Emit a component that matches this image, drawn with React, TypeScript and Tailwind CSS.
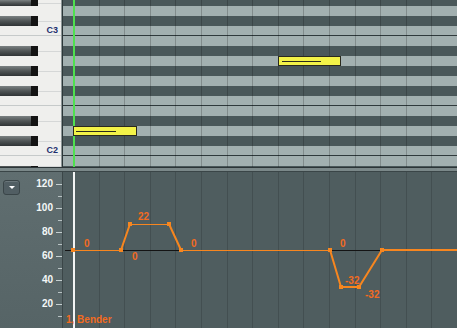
type Row = { black: boolean; h: string; line?: boolean; label?: string }

// top to bottom, D#3 (cut) .. A#1 (cut)
const rows: Row[] = [
  { black: true, h: 'h-[6px]' },
  { black: false, h: 'h-[10px]' },
  { black: true, h: 'h-[10px]' },
  { black: false, h: 'h-[10px]', line: true, label: 'C3' },
  { black: false, h: 'h-[10px]' },
  { black: true, h: 'h-[10px]' },
  { black: false, h: 'h-[10px]' },
  { black: true, h: 'h-[10px]' },
  { black: false, h: 'h-[10px]' },
  { black: true, h: 'h-[10px]' },
  { black: false, h: 'h-[10px]', line: true },
  { black: false, h: 'h-[10px]' },
  { black: true, h: 'h-[10px]' },
  { black: false, h: 'h-[10px]' },
  { black: true, h: 'h-[10px]' },
  { black: false, h: 'h-[10px]', line: true, label: 'C2' },
  { black: false, h: 'h-[10px]' },
  { black: true, h: 'h-[1px]' },
]

const beats = Array.from({ length: 16 }, (_, i) => i)
const axis = [120, 100, 80, 60, 40, 20]

const pts: [number, number][] = [
  [10, 78],
  [58, 78],
  [67, 52],
  [106, 52],
  [118, 78],
  [267, 78],
  [278, 115],
  [296, 115],
  [319, 78],
]

const ORANGE = '#f7861f'

function PianoRow({ r }: { r: Row }) {
  if (r.black) {
    return (
      <div className={`flex ${r.h}`}>
        <div className="flex w-[38px]">
          <div className="flex-1 bg-linear-to-b from-[#7b8182] via-[#4f5455] to-[#303436]" />
          <div className="w-[7px] bg-[#141414]" />
        </div>
        <div className="flex flex-1 flex-col justify-center bg-[#efefed]">
          <div className="h-px bg-[#d5d7d7]" />
        </div>
      </div>
    )
  }
  return (
    <div
      className={`flex items-center justify-end bg-[#efefed] pr-[3px] ${r.h} ${r.line ? 'border-b border-[#c6caca]' : ''}`}
    >
      {r.label ? <span className="text-[9px] font-bold leading-none text-[#1e2f6e]">{r.label}</span> : null}
    </div>
  )
}

function Controller() {
  return (
    <svg width={394} height={156} viewBox="0 0 394 156" className="block">
      {beats.slice(1).map((k) => (
        <line
          key={k}
          x1={10.5 + Math.round(25.6 * k)}
          x2={10.5 + Math.round(25.6 * k)}
          y1={0}
          y2={156}
          stroke="#000"
          strokeOpacity={0.14}
        />
      ))}
      <line x1={2} x2={394} y1={78.5} y2={78.5} stroke="#141414" />
      <rect x={10} y={0} width={2} height={156} fill="#f2f4f4" />

      <g stroke={ORANGE} fill="none">
        <path d="M10 78.5 H58 M67 52.5 H106 M118 78.5 H267" strokeWidth={1} />
        <path d="M58 78 L67 52 M106 52 L118 78" strokeWidth={2} />
        <path d="M267 78 L278 115 L296 115 L319 78 H394" strokeWidth={2} />
      </g>
      {pts.map(([x, y], i) => (
        <rect key={i} x={x - 2} y={y - 2} width={4} height={4} fill={ORANGE} />
      ))}

      <g className="fill-[#f26b1f] text-[10px] font-bold">
        <text x={21} y={75}>0</text>
        <text x={69} y={88}>0</text>
        <text x={75} y={48}>22</text>
        <text x={128} y={75}>0</text>
        <text x={277} y={75}>0</text>
        <text x={282} y={112}>-32</text>
        <text x={302} y={126}>-32</text>
        <text x={3} y={151}>1, Bender</text>
      </g>
    </svg>
  )
}

export default function App() {
  return (
    <div className="flex h-[328px] w-[457px] flex-col overflow-hidden bg-[#4f5d5f] font-['Liberation_Sans',sans-serif]">
      {/* piano roll */}
      <div className="flex h-[167px] shrink-0">
        <div className="flex w-[61px] shrink-0 flex-col overflow-hidden">
          {rows.map((r, i) => (
            <PianoRow key={i} r={r} />
          ))}
        </div>
        <div className="w-px bg-[#8d9797]" />
        <div className="w-px bg-[#2d383a]" />
        <div className="relative flex flex-1 flex-col overflow-hidden">
          {rows.map((r, i) => (
            <div
              key={i}
              className={`${r.h} ${r.black ? 'bg-[#4a585a]' : 'bg-[#a2b0b0]'} ${r.line ? 'border-b border-[#2f3a3c]' : ''}`}
            />
          ))}
          <div className="absolute inset-0 flex">
            <div className="w-[10px] shrink-0" />
            {beats.map((k) => (
              <div key={k} className="w-[25.6px] shrink-0 border-l border-black/20" />
            ))}
          </div>
          <div className="absolute inset-y-0 left-[10px] w-[2px] bg-[#4fe04f]" />

          <div className="absolute left-[10px] top-[126px] flex h-[10px] w-[64px] items-center border border-[#2a2a1e] bg-[#f3f348] pl-[2px]">
            <div className="h-px w-[40px] bg-[#2b2b1c]" />
          </div>
          <div className="absolute left-[215px] top-[56px] flex h-[10px] w-[63px] items-center border border-[#2a2a1e] bg-[#f3f348] pl-[3px]">
            <div className="h-px w-[39px] bg-[#2b2b1c]" />
          </div>
        </div>
      </div>

      {/* splitter */}
      <div className="h-px shrink-0 bg-[#2c3537]" />
      <div className="h-[3px] shrink-0 bg-[#7b8889]" />
      <div className="h-px shrink-0 bg-[#3a4547]" />

      {/* event editor */}
      <div className="flex h-[156px] shrink-0">
        <div className="flex w-[63px] shrink-0 border-r border-[#3b4648] bg-linear-to-b from-[#606e70] to-[#566466]">
          <div className="w-[20px] shrink-0 pl-[3px] pt-[8px]">
            <button
              type="button"
              className="flex h-[15px] w-[17px] items-center justify-center rounded-[3px] border border-[#3a4548] bg-[#515e63] shadow-[inset_0_1px_0_rgba(255,255,255,0.15)]"
            >
              <span className="h-0 w-0 border-x-[3px] border-t-[3px] border-x-transparent border-t-white" />
            </button>
          </div>
          <div className="flex flex-1 flex-col pt-[6px]">
            {axis.map((v) => (
              <div key={v} className="flex flex-col">
                <div className="flex h-[12px] items-center justify-end">
                  <span className="mr-[3px] text-[10px] font-bold leading-none text-[#f4f8f8]">{v}</span>
                  <div className="h-px w-[6px] bg-[#c5cfd0]" />
                </div>
                <div className="flex h-[12px] items-center justify-end">
                  <div className="h-px w-[4px] bg-[#b8c2c3]" />
                </div>
              </div>
            ))}
          </div>
        </div>
        <div className="flex-1 overflow-hidden">
          <Controller />
        </div>
      </div>
    </div>
  )
}
